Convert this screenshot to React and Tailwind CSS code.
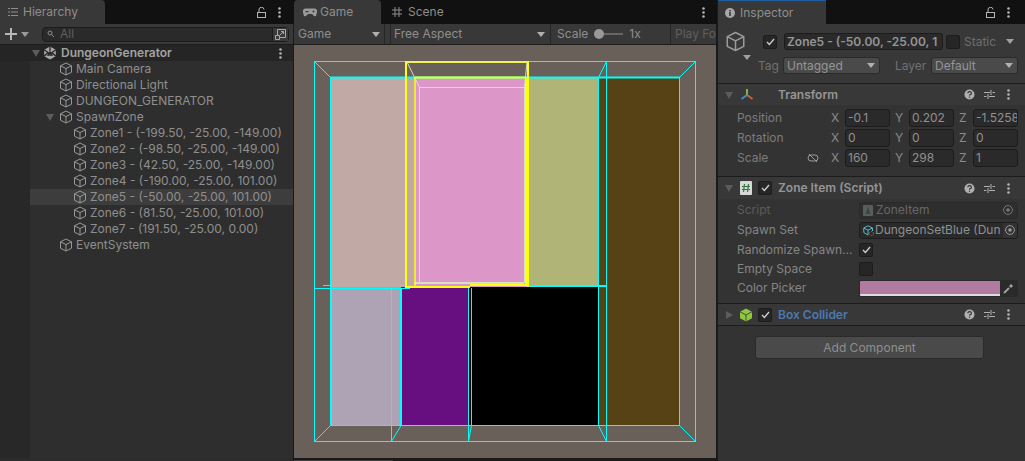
import React from "react";

function Cube({ size = 14, color = "#a0a0a0", sw = 1 }) {
  return (
    <svg width={size} height={size} viewBox="0 0 14 14" fill="none" stroke={color} strokeWidth={sw} className="shrink-0">
      <path d="M7 1 L12.5 3.8 V10.2 L7 13 L1.5 10.2 V3.8 Z M1.5 3.8 L7 6.6 L12.5 3.8 M7 6.6 V13" strokeLinejoin="round" />
    </svg>
  );
}
function Tri({ open = true, color = "#5c5c5c", size = 8 }) {
  return (
    <svg width={size} height={size} viewBox="0 0 8 8" className="shrink-0">
      <path d={open ? "M0 1 H8 L4 8 Z" : "M1 0 V8 L8 4 Z"} fill={color} />
    </svg>
  );
}
function Caret({ color = "#b0b0b0" }) {
  return (
    <svg width="8" height="5" viewBox="0 0 8 5" className="shrink-0"><path d="M0 0 H8 L4 5 Z" fill={color} /></svg>
  );
}
function Dots({ color = "#b4b4b4" }) {
  return (
    <svg width="3" height="11" viewBox="0 0 3 11" className="shrink-0">
      <circle cx="1.5" cy="1.5" r="1.3" fill={color} /><circle cx="1.5" cy="5.5" r="1.3" fill={color} /><circle cx="1.5" cy="9.5" r="1.3" fill={color} />
    </svg>
  );
}
function Lock() {
  return (
    <svg width="9" height="11" viewBox="0 0 9 11" fill="none" stroke="#b4b4b4" className="shrink-0">
      <rect x="0.5" y="5.5" width="8" height="5" /><path d="M2 5.5 V3 A2.5 2.5 0 0 1 7 2.5" />
    </svg>
  );
}
function Help() {
  return (
    <svg width="11" height="11" viewBox="0 0 11 11" className="shrink-0">
      <circle cx="5.5" cy="5.5" r="5" fill="#b0b0b0" />
      <path d="M3.8 4.2 A1.8 1.6 0 1 1 5.8 5.8 L5.5 6.6" stroke="#333" strokeWidth="1.2" fill="none" />
      <rect x="4.9" y="7.6" width="1.2" height="1.2" fill="#333" />
    </svg>
  );
}
function Sliders() {
  return (
    <svg width="11" height="11" viewBox="0 0 11 11" fill="none" stroke="#b0b0b0" className="shrink-0">
      <path d="M0 3.5 H6 M8.5 3.5 H11 M7 1 V6 M0 7.5 H2.5 M5 7.5 H11 M4 5 V10" />
    </svg>
  );
}
function HeaderIcons() {
  return (
    <div className="ml-auto mr-[15px] flex items-center gap-[9px]">
      <Help />
      <Sliders />
      <span className="ml-[3px]"><Dots /></span>
    </div>
  );
}
function Check({ checked = true, size = 14 }) {
  return (
    <div className="flex shrink-0 items-center justify-center rounded-[2px] border border-[#1c1c1c] bg-[#262626]" style={{ width: size, height: size }}>
      {checked && (
        <svg width="9" height="8" viewBox="0 0 9 8" fill="none" stroke="#d0d0d0" strokeWidth="1.3"><path d="M1 4 L3.4 6.5 L8 1" /></svg>
      )}
    </div>
  );
}
function Target() {
  return (
    <svg width="10" height="10" viewBox="0 0 10 10" fill="none" stroke="#9a9a9a" className="shrink-0">
      <circle cx="5" cy="5" r="4.4" /><circle cx="5" cy="5" r="1.8" fill="#9a9a9a" stroke="none" />
    </svg>
  );
}

function TreeRow({ indent, label, arrow, selected, root, arrowClass = "justify-center" }) {
  return (
    <div className={`flex h-[16px] items-center ${selected ? "bg-[#3d3d3d]" : ""} ${root ? "bg-[#252525]" : ""}`} style={{ paddingLeft: indent }}>
      <span className={`flex w-[14px] shrink-0 ${arrowClass}`}>{arrow && <Tri />}</span>
      {root ? (
        <svg width="14" height="14" viewBox="0 0 14 14" className="shrink-0">
          <path d="M7 0.5 L12.8 3.8 V10.2 L7 13.5 L1.2 10.2 V3.8 Z" fill="#a8a8a8" />
          <path d="M7 0.5 V5 M1.2 3.8 L5 6.5 L1.2 10.2 M12.8 3.8 L9 6.5 L12.8 10.2 M5 9 H9 L7 6 Z" stroke="#252525" strokeWidth="1.3" fill="none" />
        </svg>
      ) : (
        <Cube size={14} color="#9a9a9a" />
      )}
      <span className={`whitespace-nowrap ${root ? "ml-[4px] font-semibold text-[#a2a2a2]" : "ml-[3px] text-[#8f8f8f]"}`}>{label}</span>
      {root && <span className="ml-auto mr-[11px]"><Dots /></span>}
    </div>
  );
}

function Hierarchy() {
  const zones = [
    "Zone1 - (-199.50, -25.00, -149.00)",
    "Zone2 - (-98.50, -25.00, -149.00)",
    "Zone3 - (42.50, -25.00, -149.00)",
    "Zone4 - (-190.00, -25.00, 101.00)",
    "Zone5 - (-50.00, -25.00, 101.00)",
    "Zone6 - (81.50, -25.00, 101.00)",
    "Zone7 - (191.50, -25.00, 0.00)",
  ];
  return (
    <div className="flex w-[293px] shrink-0 flex-col">
      <div className="flex h-[24px] shrink-0 items-center bg-[#111111]">
        <div className="flex h-full w-[105px] items-center gap-[5px] rounded-tr-[4px] bg-[#383838] pl-[8px] text-[#8e8e8e]">
          <svg width="10" height="8" viewBox="0 0 10 8" stroke="#8e8e8e" fill="none" className="shrink-0"><path d="M0 .5 H2 M3 .5 H10 M0 4 H2 M3 4 H10 M0 7.5 H2 M3 7.5 H10" /></svg>
          <span>Hierarchy</span>
        </div>
        <div className="ml-auto mr-[12px] flex items-center gap-[12px]"><Lock /><Dots /></div>
      </div>
      <div className="flex h-[21px] shrink-0 items-center border-b border-[#1c1c1c] bg-[#383838]">
        <svg width="12" height="12" viewBox="0 0 12 12" className="ml-[5px] shrink-0"><path d="M5 0 H7 V5 H12 V7 H7 V12 H5 V7 H0 V5 H5 Z" fill="#b8b8b8" /></svg>
        <span className="ml-[4px]"><Caret color="#9a9a9a" /></span>
        <div className="ml-[13px] flex h-[15px] w-[247px] items-center rounded-[4px] border border-[#1c1c1c] bg-[#2a2a2a] pl-[4px]">
          <svg width="9" height="8" viewBox="0 0 9 8" fill="none" stroke="#8e8e8e" className="shrink-0"><circle cx="3" cy="3" r="2" /><path d="M4.5 4.5 L7 7" /></svg>
          <span className="ml-[4px] text-[#5f5f5f]">All</span>
          <div className="ml-auto flex h-full w-[16px] items-center justify-center border-l border-[#1c1c1c] bg-[#3a3a3a]">
            <svg width="11" height="11" viewBox="0 0 11 11" fill="none" stroke="#a8a8a8" className="shrink-0"><path d="M2.5 6 V.5 H10.5 V8.5 H5 M.5 6.5 H4.5 V10.5 H.5 Z M5 6 L8.5 2.5 M6 2.5 H8.5 V5" /></svg>
          </div>
        </div>
      </div>
      <div className="flex min-h-0 flex-1 bg-[#2c2c2c] pb-[3px]">
        <div className="flex-1 bg-[#2e2e2e]">
          <div className="h-full bg-[linear-gradient(to_right,#282828_30px,#2e2e2e_30px)]">
            <TreeRow indent={29} label="DungeonGenerator" arrow root />
            <TreeRow indent={45} label="Main Camera" />
            <TreeRow indent={45} label="Directional Light" />
            <TreeRow indent={45} label="DUNGEON_GENERATOR" />
            <TreeRow indent={45} label="SpawnZone" arrow arrowClass="justify-start pl-[1px]" />
            {zones.map((z, i) => (
              <div key={z} className={i === 4 ? "ml-[30px]" : ""}>
                <TreeRow indent={i === 4 ? 29 : 59} label={z} selected={i === 4} />
              </div>
            ))}
            <TreeRow indent={45} label="EventSystem" />
          </div>
        </div>
      </div>
    </div>
  );
}

function Viewport() {
  const C = "#00ffff";
  const Y = "#ffff10";
  const L = "#d8e0c0";
  const line = (x1, y1, x2, y2, c = C, w = 1) => <line x1={x1} y1={y1} x2={x2} y2={y2} stroke={c} strokeWidth={w} />;
  return (
    <svg width="422" height="413" viewBox="294 45 422 413" className="block">
      <rect x="294" y="45" width="422" height="413" fill="#69605a" />
      <rect x="330" y="77" width="85" height="210" fill="#c1a9a6" />
      <rect x="415" y="77" width="112" height="210" fill="#dc97c8" />
      <rect x="527" y="77" width="71" height="210" fill="#b0b577" />
      <rect x="598" y="77" width="82" height="348" fill="#574216" />
      <rect x="330" y="287" width="71" height="138" fill="#aea3b4" />
      <rect x="401" y="287" width="68" height="138" fill="#670e80" />
      <rect x="469" y="287" width="129" height="138" fill="#000000" />

      {line(314, 61.5, 696, 61.5)}
      {line(314, 441.5, 696, 441.5)}
      {line(314.5, 61, 314.5, 442)}
      {line(695.5, 61, 695.5, 442)}
      {line(606.5, 61, 606.5, 442)}
      {line(330, 77.5, 680, 77.5, C, 2)}
      {line(331, 77, 331, 425, C, 2)}
      {line(679.5, 77, 679.5, 425)}
      {line(598.5, 77, 598.5, 425)}
      {line(330, 425.5, 680, 425.5)}
      {line(314, 288.5, 410, 288.5)}
      {line(323, 285.5, 410, 285.5)}
      {line(528, 286, 606, 286, C, 2)}
      {line(391.5, 288, 391.5, 441)}
      {line(401, 288, 401, 425, C, 2)}
      {line(468.5, 288, 468.5, 441)}
      {line(471.5, 288, 471.5, 425)}
      {line(314.5, 61.5, 330.5, 77.5)}
      {line(606.5, 61.5, 598.5, 77.5)}
      {line(695.5, 61.5, 679.5, 77.5)}
      {line(330.5, 425.5, 314.5, 441.5)}
      {line(401, 425.5, 391.5, 441.5)}
      {line(471.5, 425.5, 468.5, 441.5)}
      {line(598.5, 425.5, 606.5, 441.5)}
      {line(679.5, 425.5, 695.5, 441.5)}

      {line(419.5, 87.5, 524, 87.5, L)}
      {line(419.5, 87, 419.5, 283, L)}
      {line(524.5, 87, 524.5, 283, L)}
      {line(407, 62, 419.5, 87.5, L)}
      {line(527, 62, 524.5, 87.5, L)}
      {line(414, 283, 524, 283, L, 2)}

      {line(406, 61, 406, 288, Y, 2)}
      {line(528, 61, 528, 287, Y, 2)}
      {line(406, 62, 528, 62, "#f0f060", 2)}
      {line(406, 287, 470, 287, Y, 2)}
      {line(470, 285, 528, 285, Y, 2)}
      {line(415, 77.5, 526, 77.5, Y, 2)}
      {line(415, 77, 415, 286, Y, 1.5)}
      {line(526, 77, 526, 286, Y, 2)}
    </svg>
  );
}

function Game() {
  return (
    <div className="flex w-[424px] shrink-0 flex-col bg-[#1a1a1a] px-[1px]">
      <div className="-mx-[1px] flex h-[24px] shrink-0 items-center bg-[#111111] pl-[1px]">
        <div className="flex h-full w-[87px] items-center gap-[3px] rounded-t-[4px] bg-[#383838] pl-[9px] text-[#8e8e8e]">
          <svg width="14" height="9" viewBox="0 0 14 9" className="shrink-0">
            <path d="M3 .5 H11 A2.8 3 0 0 1 13.8 5 L13 8 Q11.5 9 10 7 L9 6 H5 L4 7 Q2.5 9 1 8 L.2 5 A2.8 3 0 0 1 3 .5 Z" fill="#9a9a9a" />
            <rect x="2.5" y="3" width="3" height="1.2" fill="#383838" /><circle cx="10.5" cy="3.6" r="1" fill="#383838" />
          </svg>
          <span>Game</span>
        </div>
        <svg width="10" height="10" viewBox="0 0 10 10" stroke="#8e8e8e" className="ml-[11px] shrink-0"><path d="M3 0 V10 M7 0 V10 M0 3 H10 M0 7 H10" /></svg>
        <span className="ml-[6px] text-[#8e8e8e]">Scene</span>
        <span className="ml-auto mr-[12px]"><Dots /></span>
      </div>
      <div className="flex h-[21px] shrink-0 items-center overflow-hidden border-b border-[#1c1c1c] bg-[#383838] text-[#8e8e8e]">
        <div className="flex h-full w-[91px] shrink-0 items-center justify-between border-r border-[#262626] pl-[4px] pr-[4px]"><span>Game</span><Caret /></div>
        <div className="h-full w-[6px] shrink-0 border-r border-[#262626]" />
        <div className="flex h-full w-[160px] shrink-0 items-center justify-between border-r border-[#262626] pl-[3px] pr-[5px]"><span>Free Aspect</span><Caret /></div>
        <div className="flex h-full w-[120px] shrink-0 items-center border-r border-[#262626] pl-[6px]">
          <span>Scale</span>
          <span className="relative ml-[6px] h-[2px] w-[29px] bg-[#666666]"><span className="absolute -top-[4px] left-0 size-[10px] rounded-full bg-[#999999]" /></span>
          <span className="ml-[6px]">1x</span>
        </div>
        <span className="ml-[4px] whitespace-nowrap text-[#5f5f5f]">Play Fo</span>
      </div>
      <Viewport />
      <div className="flex h-[3px] items-end"><div className="h-[1px] w-[99px] bg-[#3a3a3a]" /></div>
    </div>
  );
}

function Dropdown({ w, label }) {
  return (
    <div className="flex h-[17px] shrink-0 items-center justify-between rounded-[3px] border border-[#2a2a2a] bg-[#4a4a4a] pl-[3px] pr-[4px] text-[#959595]" style={{ width: w }}>
      <span>{label}</span><Caret />
    </div>
  );
}
function NumField({ axis, value }) {
  return (
    <>
      <span className="w-[14px] shrink-0 text-[#8a8a8a]">{axis}</span>
      <div className="flex h-[18px] w-[45px] shrink-0 items-center overflow-hidden rounded-[3px] border border-[#1c1c1c] bg-[#2a2a2a] pl-[2px] text-[#909090] whitespace-nowrap">{value}</div>
    </>
  );
}
function TRow({ label, link, vals }) {
  return (
    <div className="flex h-[20px] items-center pl-[19px]">
      <span className="text-[#7c7c7c]">{label}</span>
      {link && (
        <svg width="12" height="10" viewBox="0 0 12 10" fill="none" stroke="#9a9a9a" className="ml-[39px] shrink-0"><path d="M4 2 H8 A3 3 0 0 1 8 8 H4 A3 3 0 0 1 4 2 Z M2 1 L10 9" /></svg>
      )}
      <div className="ml-auto mr-[7px] flex items-center gap-[5px]">
        {["X", "Y", "Z"].map((a, i) => (
          <div key={a} className="flex items-center"><NumField axis={a} value={vals[i]} /></div>
        ))}
      </div>
    </div>
  );
}
function PRow({ label, h, dim, children }) {
  return (
    <div className="flex items-center pl-[19px]" style={{ height: h }}>
      <span className={`w-[122px] shrink-0 whitespace-nowrap ${dim ? "text-[#5c5c5c]" : "text-[#858585]"}`}>{label}</span>
      {children}
    </div>
  );
}

function Inspector() {
  return (
    <div className="flex min-w-0 flex-1 flex-col border-l border-[#1a1a1a] bg-[#333333]">
      <div className="flex h-[24px] shrink-0 items-center bg-[#111111]">
        <div className="flex h-full w-[108px] items-center gap-[5px] border-t border-[#1f5f9f] bg-[#383838] pl-[7px] text-[#8e8e8e]">
          <svg width="10" height="10" viewBox="0 0 10 10" className="shrink-0"><circle cx="5" cy="5" r="5" fill="#a8a8a8" /><rect x="4.2" y="4" width="1.6" height="4" fill="#383838" /><rect x="4.2" y="2" width="1.6" height="1.4" fill="#383838" /></svg>
          <span>Inspector</span>
        </div>
        <div className="ml-auto mr-[15px] flex items-center gap-[12px]"><Lock /><Dots /></div>
      </div>

      <div className="relative h-[60px] shrink-0 border-b border-[#1c1c1c] bg-[#383838]">
        <div className="flex h-[26px] items-center pt-[9px]">
          <span className="ml-[7px]"><Cube size={21} color="#9a9a9a" /></span>
          <span className="ml-[17px]"><Check /></span>
          <div className="ml-[7px] flex h-[17px] w-[159px] items-center overflow-hidden rounded-[3px] border border-[#1c1c1c] bg-[#2a2a2a] pl-[2px] font-semibold whitespace-nowrap text-[#959595]">Zone5 - (-50.00, -25.00, 1</div>
          <span className="ml-[3px]"><Check checked={false} /></span>
          <span className="ml-[4px] text-[#6e6e6e]">Static</span>
          <span className="ml-[10px]"><Caret color="#a0a0a0" /></span>
        </div>
        <div className="absolute left-[25px] top-[31px]"><Caret color="#a0a0a0" /></div>
        <div className="mt-[7px] flex h-[17px] items-center pl-[40px]">
          <span className="w-[25px] text-[#707070]">Tag</span>
          <Dropdown w={97} label="Untagged" />
          <span className="ml-[15px] w-[36px] text-[#707070]">Layer</span>
          <Dropdown w={87} label="Default" />
        </div>
      </div>

      <div className="h-[93px] shrink-0 border-b border-[#1c1c1c]">
        <div className="flex h-[21px] items-center pl-[7px] bg-[#383838]">
          <Tri />
          <svg width="14" height="14" viewBox="0 0 14 14" fill="none" strokeWidth="1.8" className="ml-[7px] shrink-0">
            <path d="M7 7 V1" stroke="#8fc23a" /><path d="M7 7 L1.5 11" stroke="#3f8fd0" /><path d="M7 7 L12.5 11" stroke="#d0603a" />
          </svg>
          <span className="ml-[24px] font-semibold text-[#959595]">Transform</span>
          <HeaderIcons />
        </div>
        <div className="pt-[3px]">
          <TRow label="Position" vals={["-0.1", "0.202", "-1.5258"]} />
          <TRow label="Rotation" vals={["0", "0", "0"]} />
          <TRow label="Scale" link vals={["160", "298", "1"]} />
        </div>
      </div>

      <div className="h-[127px] shrink-0 border-b border-[#1c1c1c]">
        <div className="flex h-[22px] items-center pl-[7px] bg-[#383838]">
          <Tri />
          <svg width="12" height="14" viewBox="0 0 12 14" className="ml-[7px] shrink-0"><rect width="12" height="14" rx="1" fill="#d8d8d8" /><path d="M4.5 3 L3.5 11 M8.5 3 L7.5 11 M2 5.5 H10 M2 8.5 H10" stroke="#2f7d3f" strokeWidth="1.2" /></svg>
          <span className="ml-[6px]"><Check /></span>
          <span className="ml-[6px] font-semibold text-[#959595]">Zone Item (Script)</span>
          <HeaderIcons />
        </div>
        <div className="pt-[1px]">
          <PRow label="Script" h={20} dim>
            <div className="flex h-[17px] w-[159px] items-center rounded-[3px] border border-[#2a2a2a] bg-[#2e2e2e] pl-[3px] text-[#666666]">
              <svg width="10" height="11" viewBox="0 0 10 11" className="shrink-0"><rect width="10" height="11" rx="1" fill="#5c5c5c" /><path d="M5 1.5 L7.5 9 H2.5 Z" fill="#2f4f3a" /></svg>
              <span className="ml-[3px]">ZoneItem</span>
              <span className="ml-auto mr-[4px] opacity-70"><Target /></span>
            </div>
          </PRow>
          <PRow label="Spawn Set" h={20}>
            <div className="flex h-[17px] w-[159px] items-center overflow-hidden rounded-[3px] border border-[#1c1c1c] bg-[#2a2a2a] pl-[3px] text-[#909090]">
              <svg width="11" height="11" viewBox="0 0 11 11" fill="none" className="shrink-0"><path d="M5 .8 L9.5 3 V6 M5 .8 L.8 3 V7.5 L5 10 M.8 3 L5 5.2 L9.5 3 M5 5.2 V10" stroke="#5fb8c8" /><circle cx="8.5" cy="8.5" r="2" stroke="#d0603a" strokeDasharray="1 1" /></svg>
              <span className="ml-[1px] w-[128px] shrink-0 whitespace-nowrap">DungeonSetBlue (Dun</span>
              <div className="flex h-full flex-1 items-center justify-center bg-[#333333]"><Target /></div>
            </div>
          </PRow>
          <PRow label="Randomize Spawn..." h={19}><Check /></PRow>
          <PRow label="Empty Space" h={19}><Check checked={false} /></PRow>
          <PRow label="Color Picker" h={20}>
            <div className="flex h-[17px] w-[159px] overflow-hidden rounded-[2px] border border-[#2a2a2a] bg-[#2a2a2a]">
              <div className="flex w-[140px] flex-col"><div className="flex-1 bg-[#b27a9f]" /><div className="h-[2px] bg-[#dcdcdc]" /></div>
              <div className="flex flex-1 items-center justify-center">
                <svg width="11" height="11" viewBox="0 0 11 11" className="shrink-0"><path d="M1 10 L6 5" stroke="#a0a0a0" strokeWidth="2" /><path d="M6 3 L8 1 L10 3 L8 5 Z" fill="#a0a0a0" /></svg>
              </div>
            </div>
          </PRow>
        </div>
      </div>

      <div className="flex h-[22px] shrink-0 items-center border-b border-[#1c1c1c] bg-[#383838] pl-[7px]">
        <Tri open={false} />
        <svg width="14" height="14" viewBox="0 0 14 14" className="ml-[6px] shrink-0">
          <path d="M7 0.5 L13 3.7 V10.3 L7 13.5 L1 10.3 V3.7 Z" fill="#8ec63f" />
          <path d="M1 3.7 L7 7 L13 3.7 M7 7 V13.5" stroke="#333" strokeWidth="0.8" fill="none" />
        </svg>
        <span className="ml-[5px]"><Check /></span>
        <span className="ml-[6px] font-semibold text-[#4d78b0]">Box Collider</span>
        <HeaderIcons />
      </div>

      <div className="flex justify-center pt-[10px] pr-[4px]">
        <div className="flex h-[23px] w-[229px] items-center justify-center rounded-[3px] border border-[#2a2a2a] bg-[#4a4a4a] text-[#8e8e8e]">Add Component</div>
      </div>
    </div>
  );
}

export default function App() {
  return (
    <div className="flex h-[461px] w-[1025px] overflow-hidden bg-[#1a1a1a] font-['Inter',sans-serif] text-[12px] leading-[16px]">
      <Hierarchy />
      <Game />
      <Inspector />
    </div>
  );
}
